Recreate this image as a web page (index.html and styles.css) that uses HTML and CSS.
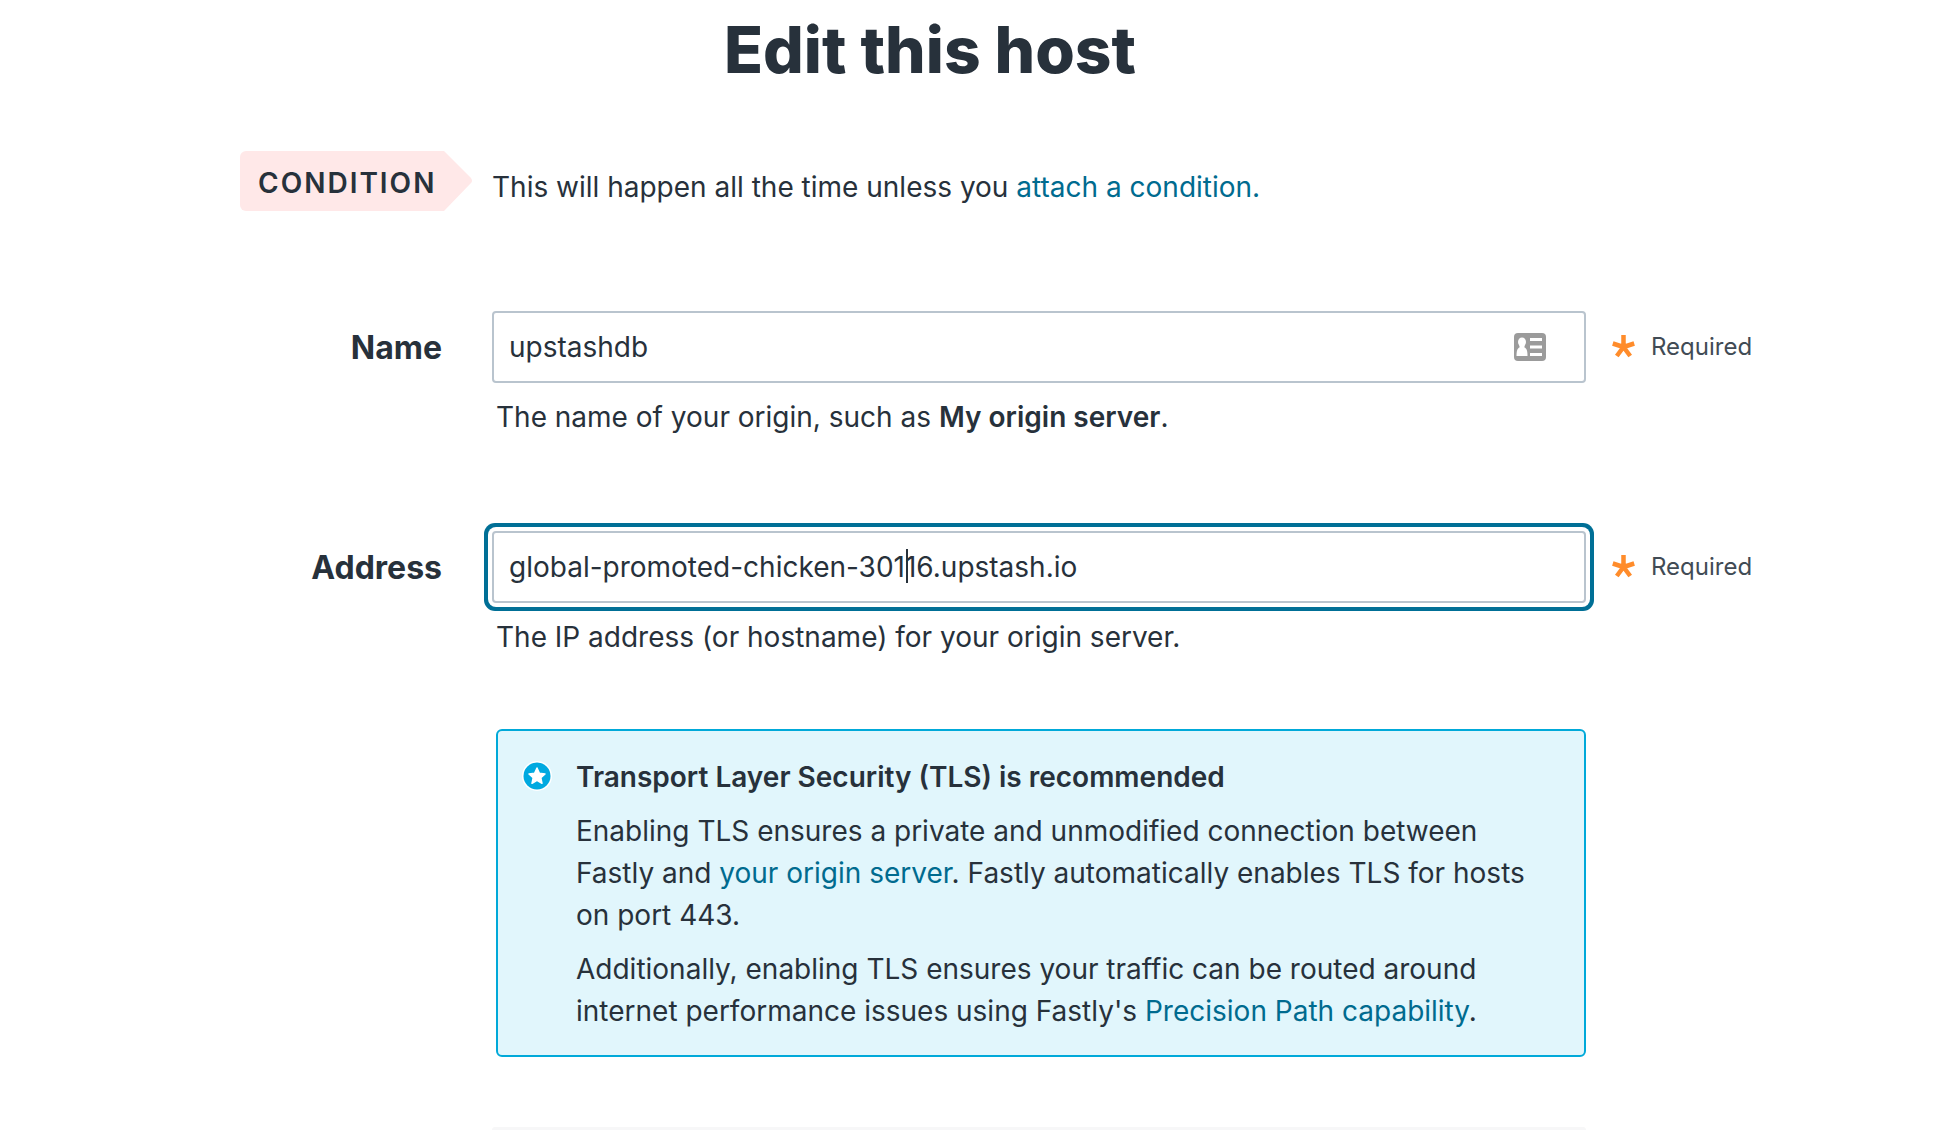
FILE: index.html
```html
<!DOCTYPE html>
<html lang="en">

<head>
    <meta charset="UTF-8">
    <meta name="viewport" content="width=device-width, initial-scale=1.0">
    <title>Edit this host</title>
    <link rel="stylesheet" href="styles.css">
</head>

<body>
    <main class="page">
        <h1 class="page-title">Edit this host</h1>

        <form class="host-form">
            <div class="row condition">
                <div class="condition-tag">
                    <span class="tag-text">CONDITION</span>
                    <svg class="tag-arrow" width="28" height="60" viewBox="0 0 28 60">
                        <path d="M0 0L27 27Q29 30 27 32L0 60Z" fill="#ffe8e8" />
                    </svg>
                </div>
                <p class="condition-text">This will happen all the time unless you <a href="#">attach a condition.</a></p>
            </div>

            <div class="row name-row">
                <label class="row-label" for="name">Name</label>
                <div class="field">
                    <input type="text" id="name" value="upstashdb">
                    <svg class="contact-icon" width="32" height="28" viewBox="0 0 32 28">
                        <rect width="32" height="28" rx="4" fill="#9b9b9b" />
                        <ellipse cx="8" cy="9" rx="4" ry="4.5" fill="#fff" />
                        <path d="M5.500 12h5v2.500c2 .8 3 3 3 8.500h-11c0-5.500 1-7.700 3-8.500z" fill="#fff" />
                        <path d="M16 6.500h12M16 14h12M16 21.500h12" stroke="#fff" stroke-width="3" />
                    </svg>
                </div>
                <div class="required">
                    <svg width="23" height="24" viewBox="0 0 23 24">
                        <path d="M11.500 12V0M11.500 12L.8 8.500M11.500 12L22.200 8.500M11.500 12L4.800 21M11.500 12L18.200 21" stroke="#ff8c2b" stroke-width="4.500" />
                    </svg>
                    <span>Required</span>
                </div>
                <p class="hint">The name of your origin, such as <strong>My origin server</strong>.</p>
            </div>

            <div class="row address-row">
                <label class="row-label" for="address">Address</label>
                <div class="field">
                    <input type="text" id="address" class="active" value="global-promoted-chicken-30116.upstash.io">
                    <span class="caret"></span>
                </div>
                <div class="required">
                    <svg width="23" height="24" viewBox="0 0 23 24">
                        <path d="M11.500 12V0M11.500 12L.8 8.500M11.500 12L22.200 8.500M11.500 12L4.800 21M11.500 12L18.200 21" stroke="#ff8c2b" stroke-width="4.500" />
                    </svg>
                    <span>Required</span>
                </div>
                <p class="hint">The IP address (or hostname) for your origin server.</p>
            </div>

            <div class="row notice-row">
                <section class="notice">
                    <svg class="notice-icon" width="30" height="30" viewBox="0 0 30 30">
                        <circle cx="15" cy="15" r="15" fill="#fff" />
                        <circle cx="15" cy="15" r="13.5" fill="#00a9e0" />
                        <path d="M15 7l2.400 5.300 5.600.6-4.200 3.800 1.200 5.600-5-2.900-5 2.900 1.200-5.600L7 12.900l5.600-.6z" fill="#fff" stroke="#fff" stroke-width="1.5" stroke-linejoin="round" />
                    </svg>
                    <div class="notice-body">
                        <h2>Transport Layer Security (TLS) is recommended</h2>
                        <p>Enabling TLS ensures a private and unmodified connection between Fastly and <a href="#">your origin server</a>. Fastly automatically enables TLS for hosts on port 443.</p>
                        <p>Additionally, enabling TLS ensures your traffic can be routed around internet performance issues using Fastly's <a href="#">Precision Path capability</a>.</p>
                    </div>
                </section>
            </div>

            <div class="row panel-row">
                <div class="panel"></div>
            </div>
        </form>
    </main>
</body>

</html>
```

FILE: styles.css
```css
* {
    box-sizing: border-box;
}

body {
    margin: 0;
    font-family: Inter, "Liberation Sans", sans-serif;
    font-size: 28px;
    line-height: 42px;
    color: #27313b;
    background: #fff;
}

h1,
h2,
p {
    margin: 0;
}

a {
    color: #006b8f;
    text-decoration: none;
}

strong {
    font-weight: 600;
}

.page {
    display: flex;
    flex-direction: column;
    min-height: 100vh;
    padding: 10px 100px 0 0;
}

.page-title {
    font-size: 64px;
    line-height: 80px;
    font-weight: 800;
    text-align: center;
}

.host-form {
    flex: 1;
    display: flex;
    flex-direction: column;
    padding-top: 61px;
}

.row {
    display: grid;
    grid-template-columns: 442px 1fr 274px;
}

/* condition */
.condition {
    grid-template-columns: 472px 1fr;
    column-gap: 20px;
}

.condition-tag {
    display: flex;
    height: 60px;
    padding-left: 240px;
}

.tag-text {
    flex: 1;
    padding-left: 18px;
    line-height: 64px;
    font-weight: 600;
    letter-spacing: 2px;
    background: #ffe8e8;
    border-radius: 6px 0 0 6px;
}

.condition-text {
    padding-top: 15px;
}

/* fields */
.name-row,
.address-row {
    align-items: center;
}

.name-row {
    margin-top: 100px;
}

.address-row {
    margin-top: 93px;
}

.row-label {
    padding-top: 2px;
    font-size: 32px;
    font-weight: 700;
    text-align: right;
}

.field {
    position: relative;
    margin-left: 50px;
}

.field input {
    display: block;
    width: 100%;
    height: 72px;
    padding: 0 15px;
    border: 2px solid #b9c4ce;
    border-radius: 4px;
    outline: none;
    font: inherit;
    color: inherit;
    background: #fff;
}

.field input.active {
    box-shadow: 0 0 0 4px #fff, 0 0 0 8px #006f96;
}

.contact-icon {
    position: absolute;
    top: 22px;
    right: 40px;
}

.caret {
    position: absolute;
    top: 18px;
    left: 414px;
    width: 2px;
    height: 34px;
    background: #27313b;
}

.required {
    display: flex;
    align-items: center;
    gap: 16px;
    padding-left: 26px;
    font-size: 24px;
    color: #414b55;
}

.hint {
    grid-column: 2;
    padding: 13px 0 0 54px;
}

/* notice */
.notice-row {
    margin-top: 71px;
}

.notice {
    grid-column: 2;
    display: flex;
    align-items: flex-start;
    gap: 24px;
    margin-left: 54px;
    padding: 25px 40px 23px 24px;
    border: 2px solid #00a9d9;
    border-radius: 6px;
    background: #e1f6fc;
}

.notice-icon {
    flex: none;
    margin-top: 5px;
}

.notice-body {
    display: flex;
    flex-direction: column;
    gap: 12px;
}

.notice-body h2 {
    font-size: 28px;
    line-height: 42px;
    font-weight: 600;
}

.panel-row {
    flex: 1;
    margin-top: 70px;
}

.panel {
    grid-column: 2;
    margin-left: 50px;
    border-radius: 6px 6px 0 0;
    background: #f7f7f8;
}
```
